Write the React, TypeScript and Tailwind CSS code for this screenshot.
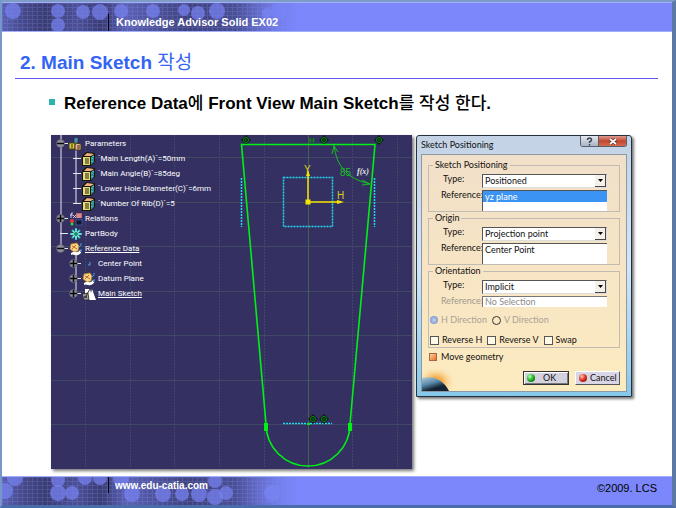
import { useState, type ReactNode } from 'react';

const GREEN = '#00f014';

const HEADER_DOTS = [
  [11, 8, 8], [56, 8, 7], [56, 22, 7], [81, 9, 7], [98, 9, 8], [119, 8, 7],
  [151, 8, 7], [182, 7, 6], [196, 10, 7], [215, 8, 8], [265, 10, 5], [277, 8, 8],
];

const FOOTER_DOTS = [
  [3, 14, 8], [13, 1, 8], [56, 3, 7], [56, 16, 8], [70, 16, 7], [83, 1, 7], [98, 1, 7],
  [119, 2, 8], [130, 17, 8], [161, 17, 8], [180, 17, 7], [197, 17, 8], [213, 4, 7], [213, 20, 8], [224, 16, 7], [270, 16, 8],
];

function CircuitBand({ id, dots }: { id: string; dots: number[][] }) {
  return (
    <svg className="absolute inset-y-0 left-0 h-full w-[310px]" viewBox="0 0 310 28" preserveAspectRatio="none" aria-hidden="true">
      <defs>
        <linearGradient id={`${id}-shade`}>
          <stop offset="0" stopColor="#5b60b4" />
          <stop offset="0.06" stopColor="#474b8c" />
          <stop offset="0.14" stopColor="#393b72" />
          <stop offset="0.24" stopColor="#4c5096" />
          <stop offset="0.32" stopColor="#393b72" />
          <stop offset="0.4" stopColor="#5b61b4" />
          <stop offset="0.6" stopColor="#3f427e" />
          <stop offset="0.78" stopColor="#4c5198" />
          <stop offset="1" stopColor="#7b87fb" />
        </linearGradient>
        <pattern id={`${id}-lines`} width="5" height="4" patternUnits="userSpaceOnUse">
          <path d="M0 .5H5M.5 0V4" stroke="#8a94f0" strokeWidth="1" opacity="0.22" />
        </pattern>
        <linearGradient id={`${id}-fade`}>
          <stop offset="0.75" stopColor="#7b87fb" stopOpacity="0" />
          <stop offset="0.97" stopColor="#7b87fb" />
        </linearGradient>
      </defs>
      <rect width="310" height="28" fill={`url(#${id}-shade)`} />
      <rect width="310" height="28" fill={`url(#${id}-lines)`} />
      {dots.map(([x, y, r]) => (
        <circle key={`${x}-${y}`} cx={x} cy={y} r={r} fill="#7580ec" opacity="0.75" />
      ))}
      <rect width="310" height="28" fill={`url(#${id}-fade)`} />
    </svg>
  );
}

function ParamsIcon() {
  return (
    <svg width="14" height="14" viewBox="0 0 14 14">
      <path d="M5 1l4-1v6l-4 1z" fill="#4a8fb4" stroke="#123" strokeWidth="0.6" />
      <path d="M0 6h6v6H0z" fill="#d8cc38" stroke="#4a4400" />
      <path d="M7 6l5 1v6H6V8z" fill="#e9b48e" stroke="#432" />
      <path d="M8 9h3M8 11h3M2 8h2M2 10h2" stroke="#3b2b20" />
    </svg>
  );
}

function ParamIcon() {
  return (
    <svg width="14" height="14" viewBox="0 0 14 14">
      <path d="M0 4l4-4 9 1v9l-4 4H0z" fill="#171507" />
      <path d="M2 4l3-3 7 1L9 4z" fill="#f0b080" />
      <path d="M1 5h7v8H1z" fill="#e6dc7c" />
      <path d="M9 5l3-2v7l-3 3z" fill="#2a8c8c" />
      <path d="M3 7h4M3 9h4M3 11h4" stroke="#262008" />
      <path d="M10 6v1M10 9v1M11 4v1" stroke="#6fe0e0" />
    </svg>
  );
}

function RelationsIcon() {
  return (
    <svg width="14" height="14" viewBox="0 0 14 14">
      <path d="M4 1Q2 0 2 3V6M1 3h3M4 3l3 3M7 3L4 6" stroke="#e8e8ff" strokeWidth="0.8" fill="none" />
      <rect x="7" y="1" width="6" height="5" fill="#c4686c" />
      <path d="M8 3h4M8 5h4" stroke="#f7dada" strokeWidth="0.7" />
      <rect x="7" y="8" width="6" height="5" fill="#14142c" stroke="#4668bb" strokeWidth="0.7" />
      <circle cx="3" cy="9" r="2" fill="#f03a28" />
      <circle cx="3" cy="12" r="1.500" fill="#20dd44" />
    </svg>
  );
}

function BodyIcon() {
  return (
    <svg width="14" height="14" viewBox="0 0 14 14">
      <path d="M7 1v12M1 7h12M3 3l8 8M11 3l-8 8" stroke="#35c3c6" strokeWidth="2" />
      <path d="M7 2v10M2 7h10M4 4l6 6M10 4l-6 6" stroke="#c9ffe0" strokeWidth="0.8" />
      <circle cx="7" cy="7" r="2" fill="#1d8c62" />
    </svg>
  );
}

function GeoSetIcon() {
  return (
    <svg width="14" height="14" viewBox="0 0 14 14">
      <path d="M2 2l6-1 2 3-1 5-4 1-4-3z" fill="#f6d788" stroke="#b88020" strokeWidth="0.8" />
      <path d="M3 4l2 1 2-2M3 7l2-2 3 2" stroke="#c8662c" fill="none" />
      <path d="M2 11q3-2 5-1t4-2q2 1 1 3-3 3-6 2T2 13z" fill="#fff" />
      <path d="M12 1q1 2-2 4M12 7q1 2-1 3" stroke="#3a9cf0" fill="none" />
    </svg>
  );
}

function PointIcon() {
  return (
    <svg width="14" height="14" viewBox="0 0 14 14">
      <path d="M8 5v3H6" stroke="#48a8f0" fill="none" />
    </svg>
  );
}

function SketchIcon() {
  return (
    <svg width="14" height="14" viewBox="0 0 14 14">
      <path d="M3 2h5l1 4 1-4 4 11H6L3 9z" fill="#fff" />
      <path d="M0 7l6-1 1 7H2z" fill="#9a9a9a" stroke="#222" strokeWidth="0.8" />
      <path d="M8 2L4 9" stroke="#333" />
      <path d="M2 9h3v2H2z" fill="#444" />
    </svg>
  );
}

type TreeNode = { label: string; icon: () => ReactNode; level: number; knob?: '+' | '-'; underline?: boolean };

const TREE: TreeNode[] = [
  { label: 'Parameters', icon: ParamsIcon, level: 0, knob: '-' },
  { label: '`Main Length(A)`=50mm', icon: ParamIcon, level: 1 },
  { label: '`Main Angle(B)`=85deg', icon: ParamIcon, level: 1 },
  { label: '`Lower Hole Diameter(C)`=6mm', icon: ParamIcon, level: 1 },
  { label: '`Number Of Rib(D)`=5', icon: ParamIcon, level: 1 },
  { label: 'Relations', icon: RelationsIcon, level: 0, knob: '+' },
  { label: 'PartBody', icon: BodyIcon, level: 0 },
  { label: 'Reference Data', icon: GeoSetIcon, level: 0, knob: '-', underline: true },
  { label: 'Center Point', icon: PointIcon, level: 1, knob: '+' },
  { label: 'Datum Plane', icon: GeoSetIcon, level: 1, knob: '+' },
  { label: 'Main Sketch', icon: SketchIcon, level: 1, knob: '+', underline: true },
];

function Branch({ knob }: { knob?: '+' | '-' }) {
  return (
    <svg width="14" height="15" viewBox="0 0 14 15" className="shrink-0">
      <path d="M5 7.500h8" stroke="#e8e8f2" />
      {knob && <circle cx="5.500" cy="7.500" r="4" fill="#8e8e9e" stroke="#4c4c5c" strokeWidth="0.5" />}
      {knob && <path d="M2 7.500h7" stroke="#08080c" strokeWidth="1.500" />}
      {knob === '+' && <path d="M5.500 4v7" stroke="#08080c" strokeWidth="1.500" />}
    </svg>
  );
}

function SpecTree() {
  return (
    <ul className="relative w-fit pt-px pl-1 font-['Roboto',sans-serif] text-[8px] leading-[15px] text-white">
      {TREE.map(({ label, icon: Icon, level, knob, underline }) => (
        <li key={label} className={`flex h-[15px] items-center ${level ? 'pl-[13px]' : ''}`}>
          <Branch knob={knob} />
          <Icon />
          <span className={`ml-[2px] whitespace-nowrap ${underline ? 'underline' : ''}`}>{label}</span>
        </li>
      ))}
    </ul>
  );
}

function Coincidence({ x, y }: { x: number; y: number }) {
  return (
    <g>
      <path d={`M${x - 5} ${y}l5-5 5 5-5 5z`} fill="#0b1d1a" />
      <circle cx={x} cy={y} r="2.500" fill="none" stroke="#0a8a14" />
      <circle cx={x} cy={y} r="0.800" fill="#0a8a14" />
    </g>
  );
}

function SketchView() {
  const columns = [34, 79, 123, 168, 213, 301, 346];
  const rows = [22, 67, 111, 156, 200, 245, 289];
  return (
    <div className="relative min-w-0 flex-1 overflow-hidden bg-[#343162] shadow-[2px_2px_3px_#777]">
      <svg className="absolute left-0 top-0" width="361" height="333" viewBox="0 0 361 333">
        <g stroke="#404863" fill="none">
          {columns.map((x) => <path key={x} d={`M${x}.5 0V333`} strokeDasharray="2 1" />)}
          {rows.map((y) => <path key={y} d={`M0 ${y}.5H361`} />)}
          <path d="M257.500 0V333" stroke="#44604f" />
        </g>
        <path d="M10 0V113M25 9V69M25 114V159" stroke="#e8e8f2" fill="none" />

        <g stroke="#22d8f0" strokeWidth="1.500" strokeDasharray="2 1" fill="none">
          <rect x="232.500" y="42.500" width="49" height="49" />
          <path d="M190.500 43V92M323.500 43V92M232 288.500H281" />
        </g>

        <text x="258" y="8" fontSize="8" fontWeight="bold" fill="#0a8a14">H</text>
        <Coincidence x={195} y={5} />
        <Coincidence x={273} y={5} />
        <Coincidence x={328} y={5} />
        <Coincidence x={262} y={284} />
        <Coincidence x={273} y={284} />

        <g stroke={GREEN} strokeWidth="1.600" fill="none">
          <path d="M190.500 9.500H324L299 289A42 42 0 0 1 215 289Z" />
        </g>
        <path d="M213 288h4v8h-4zM297 288h4v8h-4zM256 288h3v2h-3z" fill={GREEN} />

        <g stroke="#16bd22" fill="none">
          <path d="M283 10Q286 42 319 49" />
          <path d="M281 19l2-8 4 6M311 45l8 4-8 1" />
        </g>
        <text x="289" y="41" fontSize="10" fill="#16bd22">85</text>
        <text x="306" y="39" fontSize="8" fontStyle="italic" fontWeight="bold" fontFamily="Liberation Serif, serif" fill="#e8e8e8">f(x)</text>

        <path d="M257 67V36M257 67H290" stroke="#f4e600" strokeWidth="1.500" />
        <path d="M254.500 64.500h5v5h-5zM255 41l2-6 2 6zM286 65l7 2-7 2z" fill="#f4e600" />
        <text x="253" y="38" fontSize="10" fill="#d9cc18">Y</text>
        <text x="286" y="64" fontSize="10" fill="#d9cc18">H</text>
      </svg>
      <SpecTree />
    </div>
  );
}

function Group({ title, children }: { title: string; children: ReactNode }) {
  return (
    <fieldset className="min-w-0 border border-[#c0bcb4] pr-3">
      <legend className="ml-1 px-[2px] leading-3">{title}</legend>
      <div className="flex flex-col gap-[2px] pt-[3px]">{children}</div>
    </fieldset>
  );
}

function TypeRow({ id, options }: { id: string; options: string[] }) {
  return (
    <div className="flex h-[14px]">
      <label htmlFor={id} className="w-[53px] shrink-0 pl-[14px] leading-[9px]">Type:</label>
      <div className="relative min-w-0 flex-1 border border-t-[#555] border-r-[#ddd] border-b-[#ddd] border-l-[#555] bg-white">
        <select id={id} className="block h-3 w-full appearance-none bg-white pl-[2px] leading-3 outline-none">
          {options.map((o) => <option key={o}>{o}</option>)}
        </select>
        <span className="pointer-events-none absolute inset-y-0 right-0 flex w-[11px] items-center justify-center border-r border-b border-[#444] bg-[#f4f1ea]">
          <svg width="5" height="3" viewBox="0 0 5 3"><path d="M0 0h5L2.500 3z" /></svg>
        </span>
      </div>
    </div>
  );
}

function ReferenceRow({ id, value, selected }: { id: string; value: string; selected?: boolean }) {
  return (
    <div className="flex h-[21px]">
      <span id={id} className="w-[53px] shrink-0 pl-3 leading-[9px]">Reference:</span>
      <ul role="listbox" aria-labelledby={id} className="min-w-0 flex-1 border-t border-l border-[#555] bg-white">
        <li role="option" aria-selected={!!selected} className={`h-[11px] pl-[2px] leading-[11px] ${selected ? 'bg-[#3b94f4] text-white' : ''}`}>
          {value}
        </li>
      </ul>
    </div>
  );
}

function Check({ label }: { label: string }) {
  return (
    <label className="flex items-center gap-[3px]">
      <input type="checkbox" className="size-[9px] appearance-none border border-[#555] bg-[#fffbe8] checked:bg-[#555]" />
      {label}
    </label>
  );
}

function PositioningDialog() {
  const [direction, setDirection] = useState('h');
  return (
    <section className="w-[216px] shrink-0 self-start rounded-t-[3px] border border-[#22323e] bg-linear-to-b from-[#c3d2e5] via-[#d3e6f7] to-[#86c8ec] px-1 pb-1 font-['Lato',sans-serif] text-[9px] text-[#111] shadow-[2px_2px_3px_#777]">
      <header className="flex h-[18px] items-start justify-between">
        <h2 className="leading-[18px]">Sketch Positioning</h2>
        <div className="flex h-[11px] overflow-hidden rounded-b-[3px] border border-t-0 border-[#58606c]">
          <button aria-label="Help" className="flex w-[17px] items-center justify-center bg-linear-to-b from-[#e4e8ee] to-[#a9b5c4]">
            <svg width="7" height="9" viewBox="0 0 7 9"><path d="M1.500 3Q1.500 1 3.500 1T5.500 3Q5.500 4 3.500 5V6M3.500 7V8.500" stroke="#3d4552" strokeWidth="1.500" fill="none" /></svg>
          </button>
          <button aria-label="Close" className="flex w-[28px] items-center justify-center border-l border-[#58606c] bg-linear-to-b from-[#dc9a8e] via-[#c2452e] to-[#cf6b50]">
            <svg width="8" height="7" viewBox="0 0 8 7"><path d="M1 1l6 5M7 1L1 6" stroke="#5c2a24" strokeWidth="3" /><path d="M1 1l6 5M7 1L1 6" stroke="#fff" strokeWidth="1.700" /></svg>
          </button>
        </div>
      </header>

      <form className="relative border border-[#8b99a4] bg-linear-to-b from-[#f1dfc9] to-[#fdebc0] px-[6px] pt-1 pb-[6px]" onSubmit={(e) => e.preventDefault()}>
        <svg className="absolute bottom-0 left-0" width="36" height="26" viewBox="0 0 36 26" aria-hidden="true">
          <defs>
            <radialGradient id="glow">
              <stop offset="0.3" stopColor="#f3ad48" />
              <stop offset="1" stopColor="#fdebc0" stopOpacity="0" />
            </radialGradient>
            <linearGradient id="globe" x2="0.6" y2="1">
              <stop offset="0" stopColor="#b4ccdb" />
              <stop offset="0.45" stopColor="#5c8bad" />
              <stop offset="0.8" stopColor="#132334" />
            </linearGradient>
          </defs>
          <ellipse cx="14" cy="17" rx="20" ry="16" fill="url(#glow)" />
          <path d="M0 13Q18 9 27 26H0z" fill="url(#globe)" />
        </svg>

        <Group title="Sketch Positioning">
          <TypeRow id="sketch-type" options={['Positioned', 'Sliding']} />
          <ReferenceRow id="sketch-ref" value="yz plane" selected />
        </Group>
        <Group title="Origin">
          <TypeRow id="origin-type" options={['Projection point', 'Implicit']} />
          <ReferenceRow id="origin-ref" value="Center Point" />
        </Group>
        <Group title="Orientation">
          <TypeRow id="orient-type" options={['Implicit', 'X Axis']} />
          <div className="flex h-[11px]">
            <label htmlFor="orient-ref" className="w-[53px] shrink-0 pl-3 leading-[9px] text-[#a09a90]">Reference:</label>
            <input id="orient-ref" disabled defaultValue="No Selection" className="min-w-0 flex-1 border-t border-l border-[#777] bg-white pl-[2px] leading-[10px] text-[#8c8c8c]" />
          </div>
          <div className="mt-[5px] flex h-3 items-center gap-[5px] pl-px text-[#aaa294]">
            <label className="flex items-center gap-[3px]">
              <input type="radio" name="direction" disabled checked={direction === 'h'} onChange={() => setDirection('h')} className="size-2 appearance-none rounded-full bg-radial from-[#c4d4f4] to-[#6884c0]" />
              H Direction
            </label>
            <label className="flex items-center gap-[3px]">
              <input type="radio" name="direction" disabled checked={direction === 'v'} onChange={() => setDirection('v')} className="size-[9px] appearance-none rounded-full border border-[#333]" />
              V Direction
            </label>
          </div>
          <div className="mt-[6px] -mr-3 mb-px flex h-3 items-center gap-[5px] pl-px whitespace-nowrap">
            <Check label="Reverse H" />
            <Check label="Reverse V" />
            <Check label="Swap" />
          </div>
        </Group>

        <label className="mt-[3px] flex h-3 items-center gap-1 pl-px">
          <input type="checkbox" defaultChecked className="size-2 appearance-none border border-[#a8683c] bg-linear-to-br from-[#ffd0a0] to-[#e0701c]" />
          Move geometry
        </label>
        <div className="relative mt-2 flex h-[14px] justify-end gap-[6px]">
          <button className="flex w-[46px] items-center gap-2 border border-[#333] bg-[#d4d2e0] pl-[3px] leading-3 shadow-[inset_1px_1px_#fff,inset_-1px_-1px_#777]">
            <span className="size-2 rounded-full bg-radial-[at_35%_30%] from-[#b4ffb4] via-[#22b022] to-[#064a06]" />
            OK
          </button>
          <button className="flex w-[45px] items-center gap-[3px] border border-t-white border-r-[#555] border-b-[#555] border-l-white bg-[#d8d6e6] pl-[3px] leading-3">
            <span className="size-2 rounded-full bg-radial-[at_35%_30%] from-[#ffc4b4] via-[#dc2c1c] to-[#6c0a06]" />
            Cancel
          </button>
        </div>
      </form>
    </section>
  );
}

export default function App() {
  return (
    <div className="flex min-h-screen flex-col border-t-2 border-r-4 border-b-3 border-l-2 border-t-[#7f9cc6] border-r-[#5c78a4] border-b-[#4a6cab] border-l-[#7698c8] bg-white">
      <header className="relative flex h-[30px] items-end border-y border-[#a3aefb] bg-[#7b87fb] font-['Liberation_Sans',sans-serif]">
        <CircuitBand id="top" dots={HEADER_DOTS} />
        <h1 className="relative ml-[106px] h-[17px] border-l border-black pl-[7px] text-[11px] leading-4 font-bold text-white">
          Knowledge Advisor Solid EX02
        </h1>
      </header>

      <main className="flex flex-1 flex-col pr-[14px] pl-[13px] font-['Liberation_Sans','Noto_Sans_CJK_KR',sans-serif]">
        <h2 className="mt-[18px] border-b border-b-[#6058f0] pb-[2px] pl-[5px] text-[19px] leading-[26px] font-bold text-[#3464f4]">
          2. Main Sketch <span className="font-normal">작성</span>
        </h2>
        <ul className="mt-3 pl-[34px]">
          <li className="flex items-center gap-[9px] text-[17px] leading-[26px] font-bold text-black">
            <span className="mb-1 size-[6px] bg-[#2cb4b0]" />
            <p>
              Reference Data<span className="font-medium">에</span> Front View Main Sketch<span className="font-medium">를 작성 한다</span>.
            </p>
          </li>
        </ul>
        <div className="mt-[18px] mb-[7px] flex min-h-[333px] flex-1 gap-1 pr-[26px] pl-9">
          <SketchView />
          <PositioningDialog />
        </div>
      </main>

      <footer className="relative flex h-[29px] items-start justify-between border-t border-[#a3aefb] bg-[#7b87fb] pr-[15px] font-['Liberation_Sans',sans-serif]">
        <CircuitBand id="bottom" dots={FOOTER_DOTS} />
        <a href="http://www.edu-catia.com" className="relative ml-[106px] h-4 border-l border-black pl-[6px] text-[10px] leading-[17px] font-bold text-white">
          www.edu-catia.com
        </a>
        <p className="text-[11px] leading-[22px] text-black">©2009. LCS</p>
      </footer>
    </div>
  );
}
